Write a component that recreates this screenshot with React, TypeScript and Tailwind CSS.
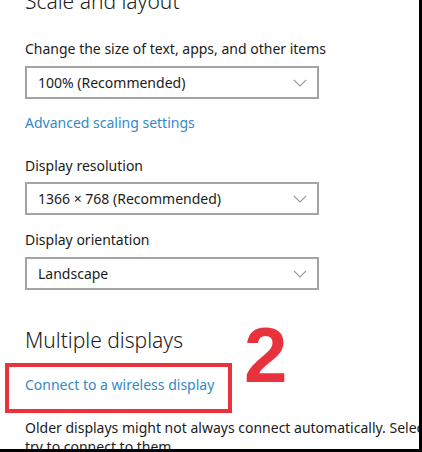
import { FC } from "react";

const Chevron: FC = () => (
	<svg width="14" height="8" viewBox="0 0 14 8" fill="none" className="shrink-0">
		<path d="M1 1l6 6 6-6" stroke="#9a9a9a" strokeWidth="1.1" />
	</svg>
);

const Select: FC<{ value: string }> = ({ value }) => (
	<div className="flex items-center justify-between w-[294px] h-[33px] border-2 border-[#a3a3a3] pl-[11px] pr-[10px] text-[14px] text-[#1b1b1b]">
		<span>{value}</span>
		<Chevron />
	</div>
);

const App: FC = () => {
	return (
		<div
			className="relative w-[422px] h-[452px] overflow-hidden bg-white border-r-[3px] border-b-[3px] border-black pl-[25px]"
			style={{ fontFamily: '"Noto Sans", "Open Sans", sans-serif' }}
		>
			<h2 className="mt-[-13px] text-[21px] leading-[28px] font-light text-[#1b1b1b]">Scale and layout</h2>
			<p className="mt-[24px] text-[14px] leading-[20px] text-[#1b1b1b]">Change the size of text, apps, and other items</p>
			<div className="mt-[7px]">
				<Select value="100% (Recommended)" />
			</div>
			<a className="block mt-[14px] text-[14px] leading-[20px] text-[#3389c6]">Advanced scaling settings</a>
			<p className="mt-[23px] text-[14px] leading-[20px] text-[#1b1b1b]">Display resolution</p>
			<div className="mt-[6px]">
				<Select value="1366 × 768 (Recommended)" />
			</div>
			<p className="mt-[15px] text-[14px] leading-[20px] text-[#1b1b1b]">Display orientation</p>
			<div className="mt-[7px]">
				<Select value="Landscape" />
			</div>
			<h2 className="mt-[36px] text-[21px] leading-[28px] font-light text-[#1b1b1b]">Multiple displays</h2>
			<div className="relative">
				<a className="block mt-[21px] text-[14px] leading-[20px] text-[#3389c6]">Connect to a wireless display</a>
				<div className="absolute left-[-20px] top-[-12px] w-[227px] h-[50px] border-4 border-[#e8323c]" />
				<span
					className="absolute left-[219px] top-[-59px] text-[78px] leading-none font-bold text-[#e8323c]"
					style={{ fontFamily: '"Liberation Sans", Arial, sans-serif' }}
				>
					2
				</span>
			</div>
			<p className="mt-[23px] w-[500px] text-[14px] leading-[19px] text-[#1b1b1b]">
				Older displays might not always connect automatically. Select Connect to try to connect to them.
			</p>
		</div>
	);
};

export default App;
